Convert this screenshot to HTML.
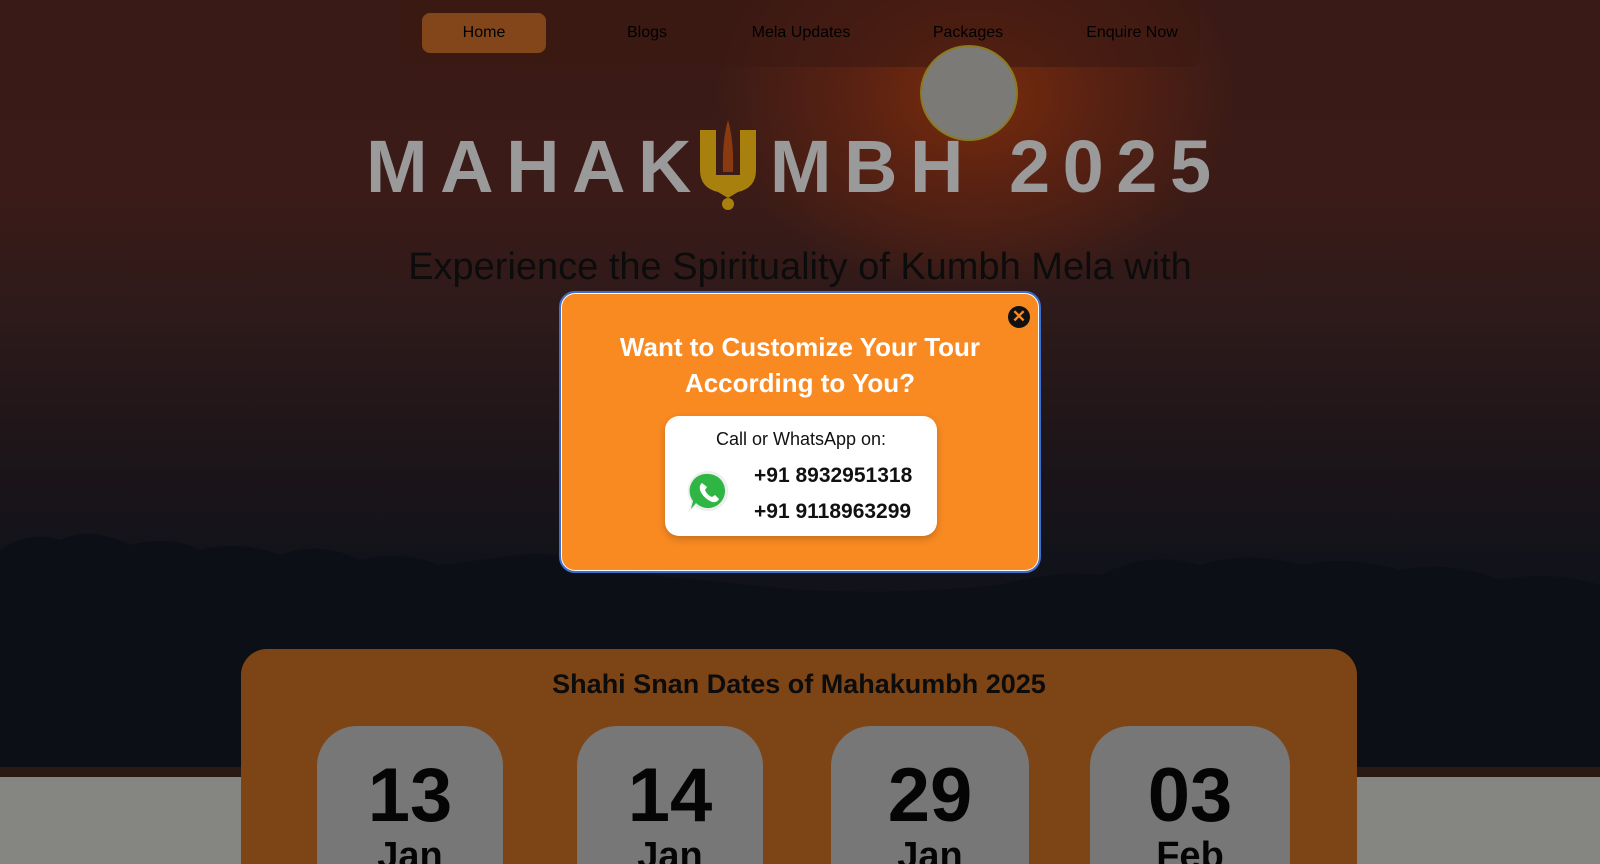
<!DOCTYPE html>
<html style="overflow:hidden;width:1600px;height:864px"><head><meta charset="utf-8"><style>
*{margin:0;padding:0;box-sizing:border-box}
body{width:1600px;height:864px;overflow:hidden;position:relative;font-family:"Liberation Sans",sans-serif;background:#858582}
.hero{position:absolute;left:0;top:0;width:1600px;height:777px;
background:radial-gradient(ellipse 260px 200px at 975px 95px,#7a2c0c 0%,#5a2212 45%,rgba(60,26,20,0) 100%),
linear-gradient(#3a1a16 0%,#3a1b17 25%,#2e1a1a 40%,#1d1519 58%,#12131a 72%,#0f1118 100%)}
.trees{position:absolute;left:0;top:510px;width:1600px;height:267px}
.nav{position:absolute;left:401px;top:0;width:799px;height:67px;background:rgba(60,25,18,.6);border-radius:0 0 10px 10px}
.sun{position:absolute;left:920px;top:45px;width:98px;height:96px;border-radius:50%;background:#7b7a76;border:2px solid #8a7a20}
.title{position:absolute;left:366px;top:124px;font-size:74px;font-weight:bold;color:#9a9a9a;letter-spacing:12.5px;white-space:nowrap}
.sub{position:absolute;left:0;width:1600px;top:246px;text-align:center;font-size:38px;color:#0c0c0c}
.lnk{position:absolute;top:13px;line-height:40px;font-size:16px;color:#000;text-align:center}
.modal{position:absolute;left:559px;top:291px;width:482px;height:282px;background:#f98a22;border:2px solid #3b6fd0;border-radius:16px;box-shadow:0 0 0 1px #fff inset}
.close{position:absolute;left:447px;top:13px;width:22px;height:22px;border-radius:50%;background:#111;color:#f98a22;font-size:17px;font-weight:bold;line-height:22px;text-align:center}
.mt{position:absolute;top:36px;width:100%;text-align:center;color:#fff;font-size:26px;font-weight:bold;line-height:36px}
.box{position:absolute;left:104px;top:123px;width:272px;height:120px;background:#fff;border-radius:14px;box-shadow:0 3px 8px rgba(0,0,0,.2)}
.box .c{position:absolute;top:13px;width:100%;text-align:center;font-size:18px;color:#111}
.box .p{position:absolute;left:89px;font-size:21px;font-weight:bold;color:#111}
.panel{position:absolute;left:241px;top:649px;width:1116px;height:215px;background:#7d4515;border-radius:26px 26px 0 0;overflow:hidden}
.panel h2{position:absolute;top:20px;width:100%;text-align:center;font-size:27px;color:#0c0c0c}
.card{position:absolute;top:77px;height:138px;overflow:hidden;background:#777;border-radius:40px 40px 0 0;text-align:center;color:#050505;font-weight:bold}
.card b{display:block;font-size:76px;margin-top:30px;line-height:80px}
.card i{display:block;font-style:normal;font-size:38px;line-height:40px}
</style></head><body>
<div class="hero">
<svg class="trees" viewBox="0 0 1600 267" preserveAspectRatio="none"><path d="M0 40 Q30 20 60 30 Q90 15 130 35 Q170 25 200 40 Q240 30 280 45 Q320 30 360 50 Q400 40 440 55 Q480 50 520 45 Q560 40 600 60 Q700 70 800 80 Q900 85 1000 75 Q1050 60 1100 65 Q1150 40 1200 55 Q1250 40 1300 55 Q1350 45 1400 60 Q1450 50 1500 70 Q1550 60 1600 75 L1600 267 L0 267Z" fill="#0d0f16"/><rect x="0" y="257" width="1600" height="10" fill="#2a1a14"/></svg>
<div class="nav"></div>
<div class="sun"></div>
</div>
<div style="position:absolute;left:422px;top:13px;width:124px;height:40px;background:#82461a;border-radius:8px"></div>
<div class="lnk" style="left:422px;width:124px">Home</div>
<div class="lnk" style="left:612px;width:70px">Blogs</div>
<div class="lnk" style="left:740px;width:122px">Mela Updates</div>
<div class="lnk" style="left:925px;width:86px">Packages</div>
<div class="lnk" style="left:1080px;width:104px">Enquire Now</div>
<div class="title">MAHAK<span style="display:inline-block;width:66px"></span>MBH 2025</div>
<svg style="position:absolute;left:698px;top:120px" width="60" height="90" viewBox="0 0 60 90"><path d="M2 10 H18 V55 H42 V10 H58 V50 Q58 68 40 72 L30 78 L20 72 Q2 68 2 50Z" fill="#a8800e"/><path d="M30 0 Q24 20 25 52 H35 Q36 20 30 0Z" fill="#8a3a10"/><circle cx="30" cy="84" r="6" fill="#a8800e"/></svg>
<div class="sub">Experience the Spirituality of Kumbh Mela with</div>
<div class="panel"><h2>Shahi Snan Dates of Mahakumbh 2025</h2>
<div class="card" style="left:76px;width:186px"><b>13</b><i>Jan</i></div>
<div class="card" style="left:336px;width:186px"><b>14</b><i>Jan</i></div>
<div class="card" style="left:590px;width:198px"><b>29</b><i>Jan</i></div>
<div class="card" style="left:849px;width:200px"><b>03</b><i>Feb</i></div>
</div>
<div class="modal">
<div class="close">✕</div>
<div class="mt">Want to Customize Your Tour<br>According to You?</div>
<div class="box"><div class="c">Call or WhatsApp on:</div>
<svg style="position:absolute;left:20px;top:52px" width="48" height="48" viewBox="0 0 48 48"><path d="M24 3 A20 20 0 1 1 10 38 L3 45 L6 34 A20 20 0 0 1 24 3Z" fill="#eee"/><path d="M24 6 A17 17 0 1 1 11 35 L6 41 L8 33 A17 17 0 0 1 24 6Z" fill="#2fb543"/><path d="M17 15 Q14 17 15 22 Q18 30 27 34 Q32 35 34 31 L30 27 L27 29 Q22 27 20 22 L22 19Z" fill="#fff"/></svg>
<div class="p" style="top:48px">+91 8932951318</div>
<div class="p" style="top:84px">+91 9118963299</div>
</div>
</div>
</body></html>
